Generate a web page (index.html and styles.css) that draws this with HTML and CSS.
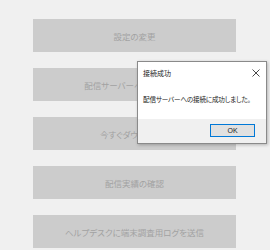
FILE: index.html
```html
<!DOCTYPE html>
<html lang="ja">
  <head>
    <meta charset="UTF-8" />
    <link rel="stylesheet" href="styles.css">
  </head>
  <body>
    <div class="menu">
      <button class="menu-button" disabled>設定の変更</button>
      <button class="menu-button" disabled>配信サーバーへの接続確認</button>
      <button class="menu-button" disabled>今すぐダウンロード</button>
      <button class="menu-button" disabled>配信実績の確認</button>
      <button class="menu-button" disabled>ヘルプデスクに端末調査用ログを送信</button>
    </div>

    <div class="dialog">
      <div class="dialog-body">
        <div class="dialog-title">
          <span>接続成功</span>
          <svg class="close-icon" width="8" height="8" viewBox="0 0 8 8">
            <path d="M0.5 0.5 L7.5 7.5 M7.5 0.5 L0.5 7.5" stroke="#333" stroke-width="0.9" fill="none" />
          </svg>
        </div>
        <div class="dialog-message">配信サーバーへの接続に成功しました。</div>
      </div>
      <div class="dialog-footer">
        <button class="ok-button">OK</button>
      </div>
    </div>
  </body>
</html>
```

FILE: styles.css
```css
body {
  margin: 0;
  width: 270px;
  height: 250px;
  overflow: hidden;
  background: #f0f0f0;
  font-family: "Noto Sans CJK JP", "Noto Sans", sans-serif;
  font-feature-settings: "palt";
  position: relative;
}

.menu {
  display: flex;
  flex-direction: column;
  gap: 16px;
  padding: 19px 0 0 33px;
}

.menu-button {
  width: 203px;
  height: 33px;
  flex-shrink: 0;
  border: none;
  background: #cccccc;
  color: #a2a2a2;
  font-family: inherit;
  font-feature-settings: "palt";
  font-size: 8.5px;
  padding: 0;
}

.dialog {
  position: absolute;
  left: 137px;
  top: 61px;
  width: 128px;
  border: 1px solid #8a8a8a;
  background: #ffffff;
  box-shadow: 1px 1px 3px rgba(0, 0, 0, 0.25);
  display: flex;
  flex-direction: column;
}

.dialog-body {
  height: 57px;
  display: flex;
  flex-direction: column;
}

.dialog-title {
  display: flex;
  align-items: center;
  justify-content: space-between;
  padding: 6px 6px 0 5px;
  height: 10px;
  font-size: 7px;
  color: #222;
}

.dialog-message {
  padding: 16px 0 0 5px;
  font-size: 6.6px;
  letter-spacing: -0.2px;
  white-space: nowrap;
  color: #222;
}

.dialog-footer {
  background: #f0f0f0;
  height: 24px;
  display: flex;
  justify-content: flex-end;
  align-items: flex-start;
  padding: 5px 11px 0 0;
  box-sizing: border-box;
}

.ok-button {
  width: 45px;
  height: 13px;
  box-sizing: border-box;
  border: 1.5px solid #0078d7;
  background: #e1e1e1;
  padding: 0;
  font-family: "Liberation Sans", sans-serif;
  font-size: 7px;
  color: #222;
}
```
